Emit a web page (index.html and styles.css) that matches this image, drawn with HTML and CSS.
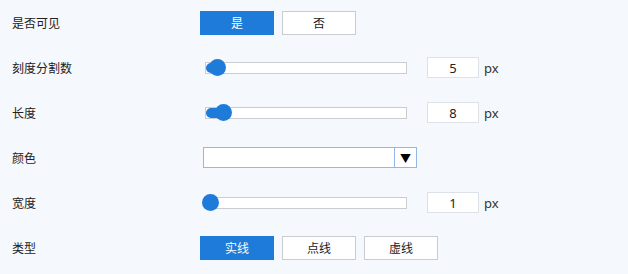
FILE: index.html
```html
<!DOCTYPE html>
<html lang="zh-CN">
<head>
  <meta charset="UTF-8">
  <title>刻度设置</title>
  <link rel="stylesheet" href="styles.css">
</head>
<body>
  <div class="form">
    <div class="row">
      <div class="label">是否可见</div>
      <div class="btn-group">
        <button class="btn active">是</button>
        <button class="btn">否</button>
      </div>
    </div>

    <div class="row">
      <div class="label">刻度分割数</div>
      <div class="slider">
        <div class="fill" style="width: 10px"></div>
        <div class="thumb" style="left: 3px"></div>
      </div>
      <input class="num" type="text" value="5">
      <span class="unit">px</span>
    </div>

    <div class="row">
      <div class="label">长度</div>
      <div class="slider">
        <div class="fill" style="width: 14px"></div>
        <div class="thumb" style="left: 9px"></div>
      </div>
      <input class="num" type="text" value="8">
      <span class="unit">px</span>
    </div>

    <div class="row">
      <div class="label">颜色</div>
      <div class="color-select">
        <div class="color-value"></div>
        <div class="color-arrow">▼</div>
      </div>
    </div>

    <div class="row">
      <div class="label">宽度</div>
      <div class="slider">
        <div class="thumb" style="left: -4px"></div>
      </div>
      <input class="num" type="text" value="1">
      <span class="unit">px</span>
    </div>

    <div class="row">
      <div class="label">类型</div>
      <div class="btn-group">
        <button class="btn active">实线</button>
        <button class="btn">点线</button>
        <button class="btn">虚线</button>
      </div>
    </div>
  </div>
</body>
</html>
```

FILE: styles.css
```css
/* Page */
body {
  margin: 0;
  background: #f5f8fd;
  font-family: "Noto Sans CJK SC", "Noto Sans", sans-serif;
  font-size: 12px;
  color: #222;
}

/* Rows */
.row {
  display: flex;
  align-items: center;
  height: 45px;
}

.label {
  width: 200px;
  box-sizing: border-box;
  padding-left: 12px;
}

/* Toggle buttons */
.btn-group {
  display: flex;
  gap: 8px;
}

.btn {
  width: 74px;
  height: 24px;
  padding: 0;
  border: 1px solid #c9ccd0;
  background: #fff;
  color: #222;
  font-family: inherit;
  font-size: 12px;
}

.btn.active {
  background: #1e7bd9;
  border-color: #1e7bd9;
  color: #fff;
}

/* Slider */
.slider {
  position: relative;
  width: 202px;
  height: 12px;
  box-sizing: border-box;
  margin-left: 5px;
  border: 1px solid #c9ccd0;
  background: #fff;
}

.fill {
  height: 10px;
  background: #1e7bd9;
  border-radius: 5px 0 0 5px;
}

.thumb {
  position: absolute;
  top: -4px;
  width: 17px;
  height: 17px;
  border-radius: 50%;
  background: #1e7bd9;
}

/* Number box */
.num {
  width: 52px;
  height: 21px;
  box-sizing: border-box;
  margin-left: 20px;
  padding: 0;
  border: 1px solid #dde2e8;
  background: #fff;
  text-align: center;
  font-family: "Noto Sans", sans-serif;
  font-size: 13px;
  color: #222;
}

.unit {
  margin-left: 5px;
  font-family: "Noto Sans", sans-serif;
  font-size: 13px;
  color: #333;
}

/* Colour picker */
.color-select {
  display: flex;
  margin-left: 3px;
  height: 21px;
}

.color-value {
  width: 192px;
  box-sizing: border-box;
  border: 1px solid #93b7e6;
  background: #fff;
}

.color-arrow {
  width: 22px;
  box-sizing: border-box;
  border: 1px solid #93b7e6;
  border-left: none;
  background: #fff;
  display: flex;
  align-items: center;
  justify-content: center;
  font-size: 11px;
  color: #000;
}
```
